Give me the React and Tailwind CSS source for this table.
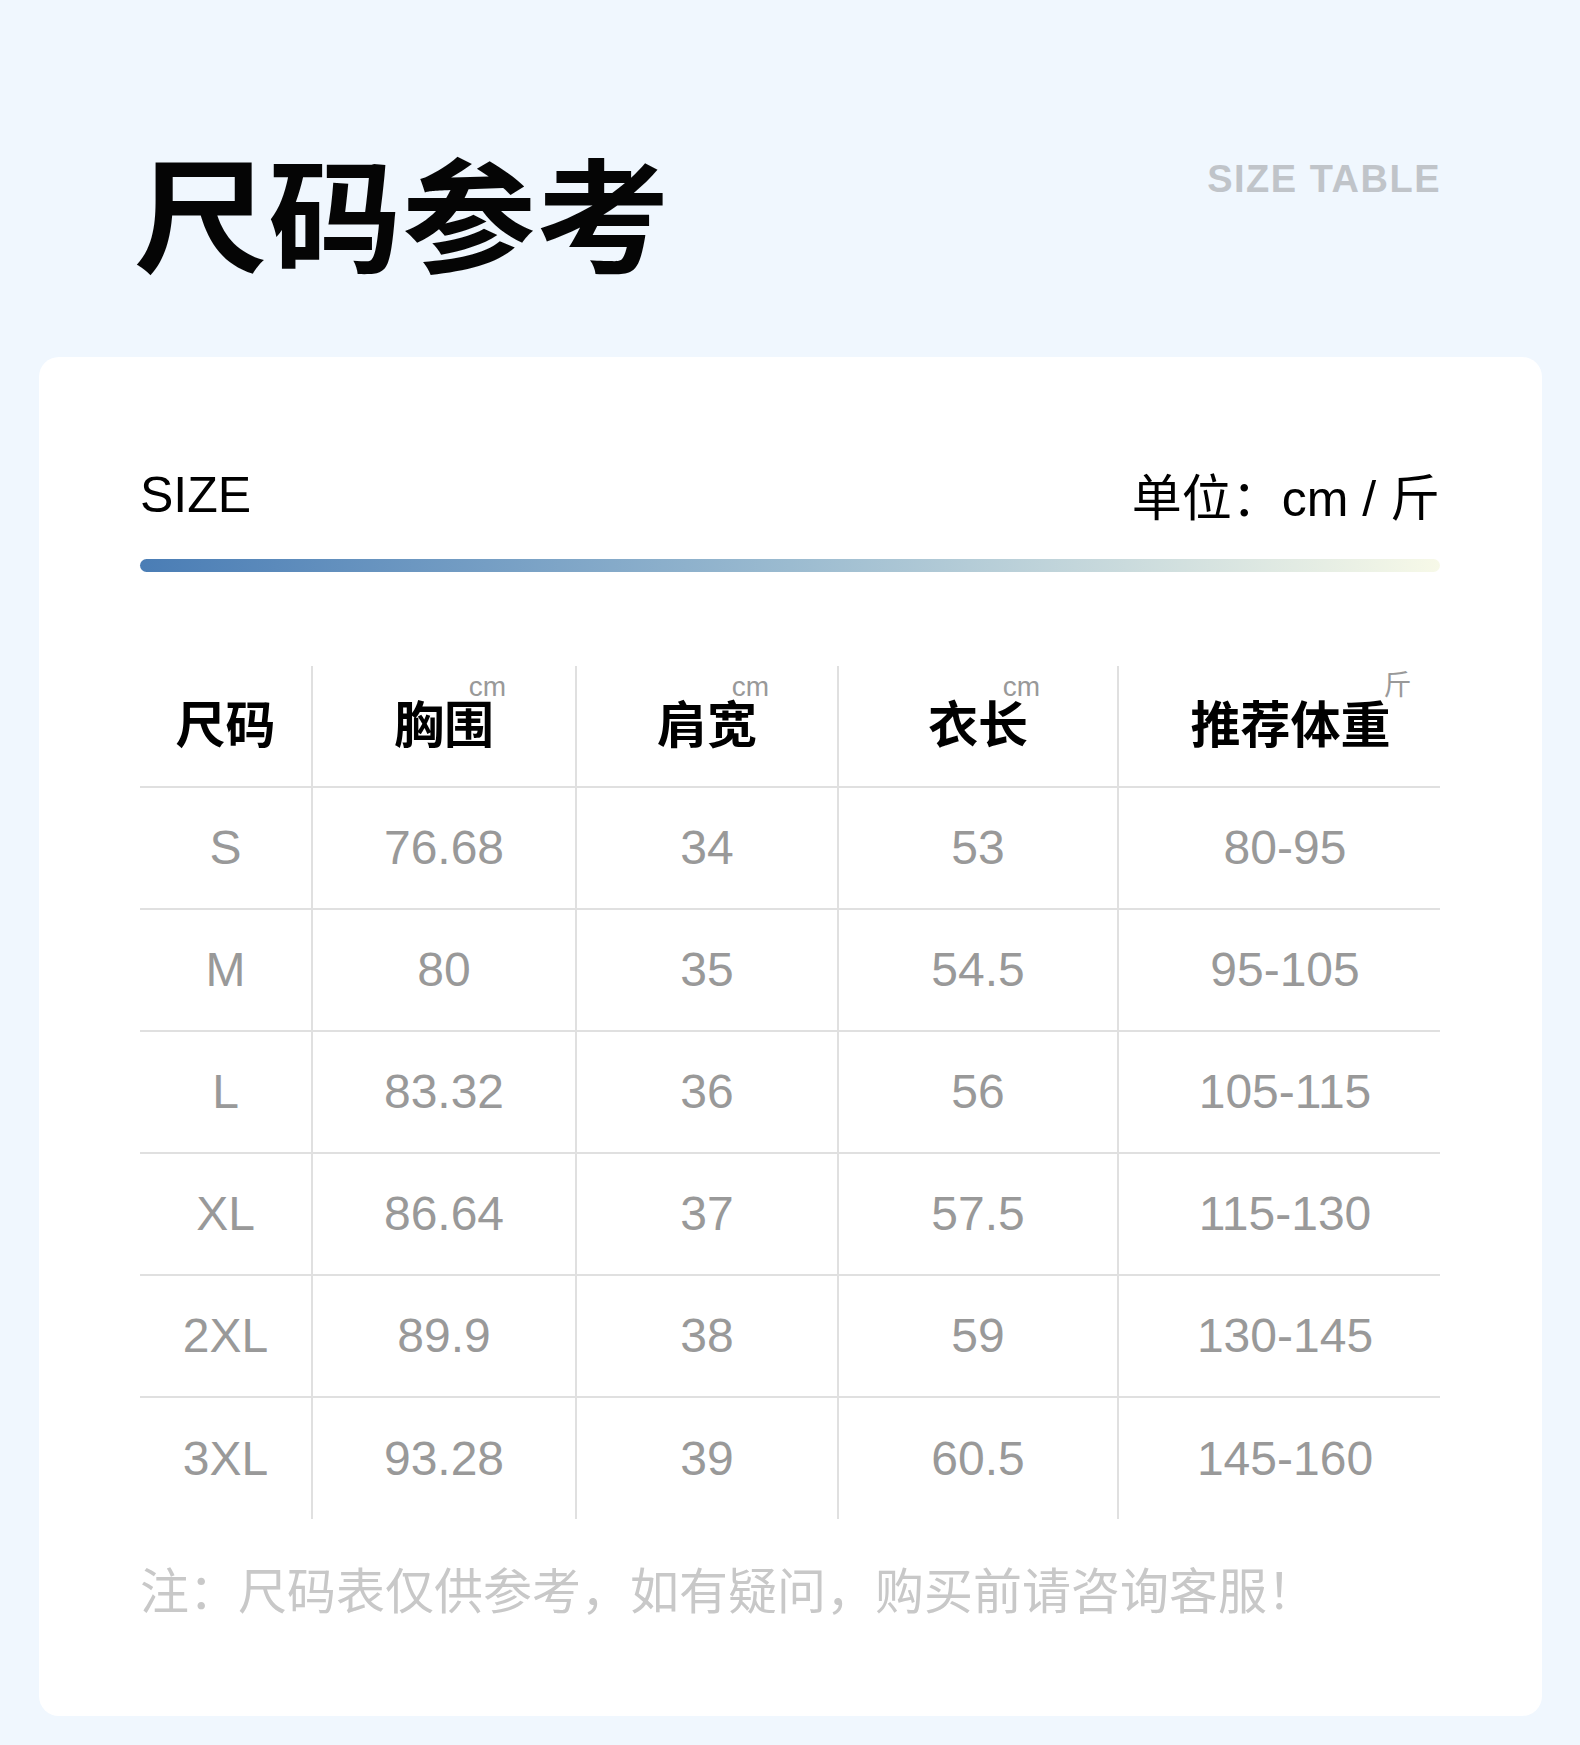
const headers = [
  { label: "尺码" },
  { label: "胸围", unit: "cm" },
  { label: "肩宽", unit: "cm" },
  { label: "衣长", unit: "cm" },
  { label: "推荐体重", unit: "斤" },
];

const rows = [
  ["S", "76.68", "34", "53", "80-95"],
  ["M", "80", "35", "54.5", "95-105"],
  ["L", "83.32", "36", "56", "105-115"],
  ["XL", "86.64", "37", "57.5", "115-130"],
  ["2XL", "89.9", "38", "59", "130-145"],
  ["3XL", "93.28", "39", "60.5", "145-160"],
];

const HeaderCell = ({ label, unit, idx }) => (
  <div
    className={`h-[122px] flex items-center justify-center border-b-2 border-[#e0e0e0] ${
      idx > 0 ? "border-l-2" : ""
    } ${idx === 4 ? "pl-[22px]" : ""}`}
  >
    <span className="relative text-[50px] leading-none font-bold text-black">
      {label}
      {unit === "cm" && (
        <span className="absolute right-[-12px] top-[-24px] text-[28px] leading-[20px] font-normal text-[#999999] font-[family-name:'Liberation_Sans',sans-serif]">
          cm
        </span>
      )}
      {unit === "斤" && (
        <span className="absolute right-[-21px] top-[-25px] text-[28px] leading-[20px] font-normal text-[#999999]">
          斤
        </span>
      )}
    </span>
  </div>
);

export default function App() {
  return (
    <div className="min-h-[1745px] bg-[#f0f7fe] pt-[148px] pb-[31px] font-[family-name:'Liberation_Sans','Noto_Sans_CJK_SC',sans-serif]">
      {/* Page title */}
      <div className="flex items-start justify-between pl-[134px] pr-[139px]">
        <h1 className="origin-top scale-y-[0.92] text-[134px] leading-none font-bold text-[#050505] font-[family-name:'Noto_Sans_CJK_SC',sans-serif]">
          尺码参考
        </h1>
        <div className="mt-[12px] text-[38px] leading-none font-bold tracking-[1.5px] text-[#c0c4c9]">
          SIZE TABLE
        </div>
      </div>

      {/* Card */}
      <div className="mt-[75px] ml-[39px] w-[1503px] bg-white rounded-[20px] pt-[113px] pb-[99px] pl-[101px] pr-[102px]">
        <div className="flex items-start justify-between">
          <div className="text-[50px] leading-none text-black">SIZE</div>
          <div className="mt-[4px] text-[50px] leading-none text-black">单位：cm / 斤</div>
        </div>
        <div className="mt-[35px] h-[13px] rounded-full bg-linear-to-r from-[#4a7db5] via-[#9bbbd0] via-50% to-[#f7f9e8]" />

        {/* Table */}
        <div className="mt-[94px] grid grid-cols-[171px_264px_262px_280px_323px]">
          {headers.map((h, i) => (
            <HeaderCell key={i} idx={i} label={h.label} unit={h.unit} />
          ))}
          {rows.map((row, r) =>
            row.map((cell, c) => (
              <div
                key={`${r}-${c}`}
                className={`flex items-center justify-center text-[48px] leading-none text-[#999999] border-[#e0e0e0] ${
                  r < rows.length - 1 ? "h-[122px] border-b-2" : "h-[121px]"
                } ${c > 0 ? "border-l-2" : ""} ${c === 4 ? "pl-[11px]" : ""}`}
              >
                {cell}
              </div>
            ))
          )}
        </div>

        <p className="mt-[49px] text-[49px] leading-none text-[#c8c8c8]">
          注：尺码表仅供参考，如有疑问，购买前请咨询客服！
        </p>
      </div>
    </div>
  );
}
